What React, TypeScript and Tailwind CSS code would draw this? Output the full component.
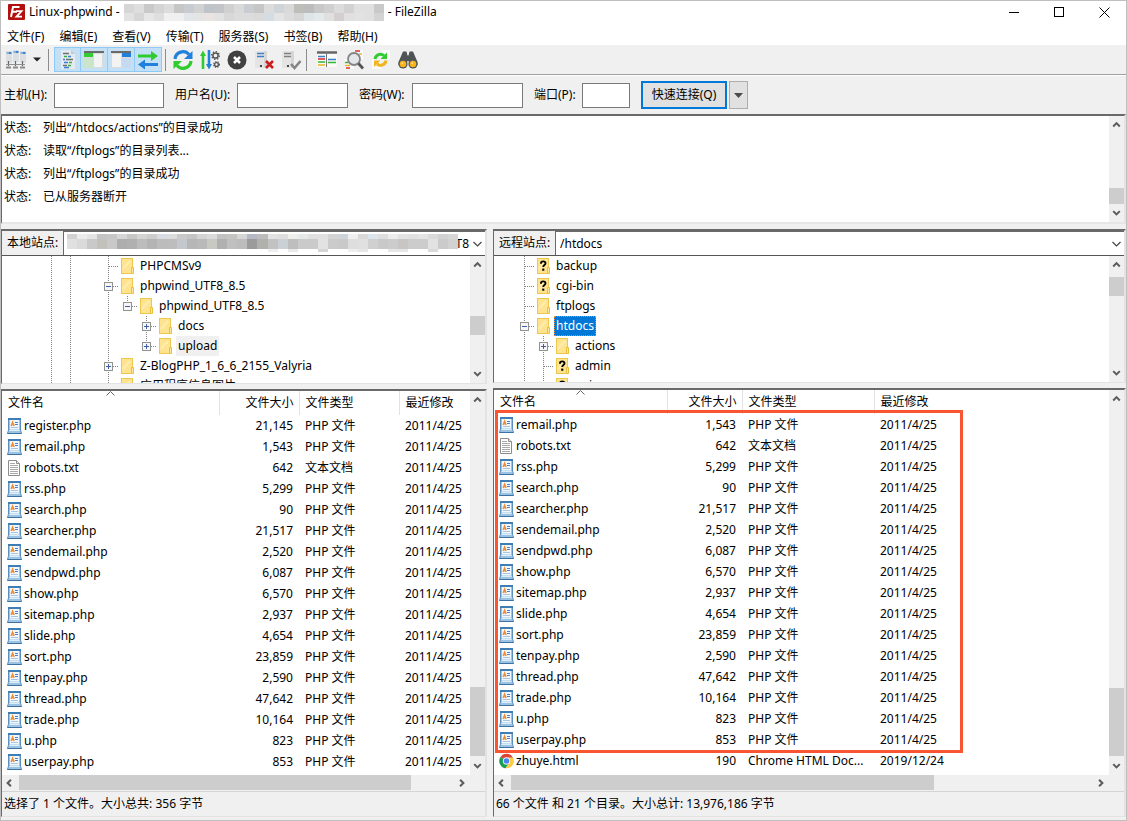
import React from "react";

type FileRow = { name: string; size: string; type: string; date: string };

const FONT = "font-['Noto_Sans','Noto_Sans_CJK_SC',sans-serif]";

const php = (name: string, size: string): FileRow => ({ name, size, type: "PHP 文件", date: "2011/4/25" });
const txt = (name: string, size: string): FileRow => ({ name, size, type: "文本文档", date: "2011/4/25" });

const sharedFiles: FileRow[] = [
  php("remail.php", "1,543"),
  txt("robots.txt", "642"),
  php("rss.php", "5,299"),
  php("search.php", "90"),
  php("searcher.php", "21,517"),
  php("sendemail.php", "2,520"),
  php("sendpwd.php", "6,087"),
  php("show.php", "6,570"),
  php("sitemap.php", "2,937"),
  php("slide.php", "4,654"),
  php("sort.php", "23,859"),
  php("tenpay.php", "2,590"),
  php("thread.php", "47,642"),
  php("trade.php", "10,164"),
  php("u.php", "823"),
  php("userpay.php", "853"),
];

const localFiles: FileRow[] = [php("register.php", "21,145"), ...sharedFiles];
const remoteFiles: FileRow[] = [
  ...sharedFiles,
  { name: "zhuye.html", size: "190", type: "Chrome HTML Doc...", date: "2019/12/24" },
];

/* ---------- small drawings ---------- */

function FileZillaLogo() {
  return (
    <svg width="17" height="16" viewBox="0 0 17 16" className="shrink-0">
      <rect width="17" height="16" rx="1" fill="#b40f0f" />
      <path d="M3 13 5 3h6.5M4 7.8h5" stroke="#fff" strokeWidth="2" fill="none" />
      <path d="M8 7.2h5.5L8.5 12.6h5.5" stroke="#fff" strokeWidth="1.8" fill="none" />
    </svg>
  );
}

function Mosaic({ rows, cell, heights }: { rows: string[][]; cell: number; heights: number[] }) {
  const width = Math.max(...rows.map((r) => r.length)) * cell;
  const height = heights.reduce((a, b) => a + b, 0);
  let y = 0;
  return (
    <svg width="100%" height={height} viewBox={`0 0 ${width} ${height}`} preserveAspectRatio="none" shapeRendering="crispEdges" className="block">
      {rows.map((row, r) => {
        const top = y;
        y += heights[r];
        return row.map((c, i) => <rect key={`${r}-${i}`} x={i * cell} y={top} width={cell} height={heights[r]} fill={c} />);
      })}
    </svg>
  );
}

const titleMosaic = [
  "#d6d6d6 #dedede #c9c9c9 #d4d4d4 #dcdcdc #c6c6c6 #c8cbd0 #d2d2d2 #bfc4c9 #c2c4c8 #d0d0d0 #dadada #c9cdd1 #c6c6c6 #dcdcdc #cfd4d8 #d9d9d9 #bdbdb9 #bcbcbc #c8c8c8 #cfcfcf #dcdcdc #d2d2d2 #e0e0e0 #e0e0e0 #c9c9c9".split(" "),
  "#e2e2e2 #d6d6d6 #e6e6e6 #dedede #f0f0f0 #f0f0f0 #e3e6e8 #e4e4e4 #e9e4e2 #e2e2e2 #d8d8d8 #dcdcdc #dcdcdc #dadada #d4dde3 #e4e4e4 #dcdcdc #d6d6d6 #dfe4e6 #e2eaec #e0e0e0 #d2cfce #e0e0e0 #e2e2e2 #e0e0e0 #d3d3d3".split(" "),
];

const pathMosaic = [
  "#d2d2d2 #ececec #e4e4e4 #c4c4c4 #c6c6c6 #d6d6d6 #c6c6c4 #d4d4d4 #cdcdcd #d6dce2 #dcdcdc #c9c9c9 #c4c4c4 #d4d4d4 #dadada #c2c2c2 #c4c4c2 #d6d6d6 #b5b9c6 #bcbcbc #e2e2e2 #dedede #efefec #e6e9ea #e0e0e0 #e0e0e0 #d4d4d4 #cfd4d8 #efefef #d9d9d9 #dce4ec #dedede #ececec #e2e2e2 #e0e0e0 #e4e4e4 #dadada #d2d2d2 #d6d6d6".split(" "),
  "#e0e0e0 #dadada #c9c9c9 #c2c1bb #c9c9c9 #adadad #b0b0b0 #bcbcbc #b4b4b4 #bcbcbc #bdbdbd #c4c8ce #b6b6b6 #b9b9b9 #c9c9c4 #b0b0b0 #c0c0c0 #bcbcbc #9b9b9b #b0b0ac #c2c2c2 #cad0d5 #bebebe #cacaca #cacaca #e2e2e2 #cbcbcb #c9c9c9 #dedede #e0e0e0 #d0d0d0 #c9c9c9 #cccccc #c9c5c3 #cccccc #cccccc #e2e2e2 #cbcbcb #d2d2d2".split(" "),
  "#fff #fff #fff #fff #fff #fff #fff #fff #fff #fff #fff #fff #fff #fff #fff #fff #fff #fff #fff #fff #eeeeee #fff #e9e9e9 #fff #fff #d4d4d4 #fff #fff #eeeeee #e6e6e6 #fff #fff #e6e6e6 #e6e6e6 #fff #fff #d9d9d9 #fff #fff".split(" "),
];

function FolderIcon({ unknown = false }: { unknown?: boolean }) {
  return (
    <svg width="13" height="16" viewBox="0 0 13 16" className="ml-[3px] mr-1 shrink-0">
      <rect x=".5" y=".5" width="11" height="15" fill="#ffe38f" stroke="#ecc84e" />
      <path d="M2 11 9 3" stroke="#ffedb0" strokeWidth="2" />
      <path d="M10.500 9.500h2v6h-2z" fill="#ffe9a0" stroke="#e8c040" />
      {unknown && (
        <>
          <path d="M4 5.800V5q0-1.600 2.200-1.600T8.500 5.200q0 1.200-1.400 2.100-.8.500-.8 1.800" fill="none" stroke="#000" strokeWidth="1.9" />
          <rect x="5.2" y="10.6" width="2.1" height="2.1" fill="#000" />
        </>
      )}
    </svg>
  );
}

type Guide = "none" | "line" | "tee" | "plus" | "minus" | "plusEnd" | "minusEnd";

function GuideCell({ kind }: { kind: Guide }) {
  const box = kind.startsWith("plus") || kind.startsWith("minus");
  const end = kind.endsWith("End");
  return (
    <svg width="19" height="20" viewBox="0 0 19 20" className="shrink-0" shapeRendering="crispEdges">
      {kind !== "none" && <path d={end ? "M9.5 0V10" : "M9.5 0V20"} stroke="#808080" strokeDasharray="1 1" />}
      {kind !== "none" && kind !== "line" && <path d="M10 10.5H20" stroke="#808080" strokeDasharray="1 1" />}
      {box && (
        <>
          <rect x="5.5" y="6.5" width="8" height="8" fill="#f6f6f6" stroke="#919191" />
          <path d={kind.startsWith("plus") ? "M7 10.5h5M9.5 8v5" : "M7 10.5h5"} stroke="#3f5fa8" />
        </>
      )}
    </svg>
  );
}

function PhpIcon() {
  return (
    <svg width="15" height="16" viewBox="0 0 15 16" className="shrink-0">
      <path d="M1.500.5h12v11.500l1 3.500H.5l1-3.500z" fill="#9cc3e2" stroke="#5b8fbd" />
      <path d="M1 0h13v2H1z" fill="#3f7db5" />
      <path d="M3 2h9v9.500H3z" fill="#f1f8fd" />
      <path d="M4 8 5.600 4 7.200 8M4.600 6.800h2" stroke="#f08c2e" strokeWidth="1.300" fill="none" />
      <path d="M8 4.500h3M8 6.500h3" stroke="#4a7fd8" />
      <path d="M4 9.500h7" stroke="#a9c4de" />
      <path d="M2.500 12.500h10" stroke="#dceefa" />
      <path d="M.5 15.500h14" stroke="#3a72a6" />
    </svg>
  );
}

function TxtIcon() {
  return (
    <svg width="15" height="16" viewBox="0 0 15 16" className="shrink-0">
      <path d="M1.500.5h8l3 3v12h-11z" fill="#fff" stroke="#8c8c8c" />
      <path d="M9.500.5v3h3" fill="#e6e6e6" stroke="#8c8c8c" />
      <path d="M3 3.500h5M3 5.500h8M3 7.500h8M3 9.500h8M3 11.500h8M3 13.500h8" stroke="#a8a8a8" />
    </svg>
  );
}

function ChromeIcon() {
  return (
    <svg width="15" height="16" viewBox="0 0 16 16" className="shrink-0">
      <path d="M8 8 1.500 3.800A7.700 7.700 0 0 1 15 4.600H8z" fill="#dc4437" />
      <path d="M8 8 1.500 3.800A7.700 7.700 0 0 0 7 15.700L11 10z" fill="#199d58" />
      <path d="M8 4.600h7a7.700 7.700 0 0 1-8 11.100L11 9.600z" fill="#ffcd41" />
      <circle cx="8" cy="8" r="3.900" fill="#f4f4f4" />
      <circle cx="8" cy="8" r="3" fill="#4a86f0" />
    </svg>
  );
}

function RowIcon({ name }: { name: string }) {
  if (name.endsWith(".txt")) return <TxtIcon />;
  if (name.endsWith(".html")) return <ChromeIcon />;
  return <PhpIcon />;
}

/* ---------- scroll bars ---------- */

const arrowPaths = {
  up: "M4.5 9.5 8 6l3.5 3.5",
  down: "M4.5 6 8 9.5 11.5 6",
  left: "M9.5 4.5 6 8l3.5 3.5",
  right: "M6.5 4.5 10 8l-3.5 3.5",
};

function Arrow({ dir }: { dir: keyof typeof arrowPaths }) {
  return (
    <svg width="15" height="16" viewBox="0 0 16 16" className="block shrink-0">
      <path d={arrowPaths[dir]} fill="none" stroke="#5c5c5c" strokeWidth="2.2" />
    </svg>
  );
}

function VScroll({ before, thumb, after }: { before: number; thumb: number; after: number }) {
  return (
    <div aria-hidden="true" className="flex w-[15px] shrink-0 flex-col bg-[#f0f0f0] py-px">
      <Arrow dir="up" />
      <div style={{ flexGrow: before }} className="basis-0" />
      <div style={{ flexGrow: thumb }} className="basis-0 bg-[#cdcdcd]" />
      <div style={{ flexGrow: after }} className="basis-0" />
      <Arrow dir="down" />
    </div>
  );
}

function HScroll({ thumb, after }: { thumb: number; after: number }) {
  return (
    <div aria-hidden="true" className="flex h-[15px] shrink-0 items-center bg-[#f0f0f0] pr-4">
      <Arrow dir="left" />
      <div style={{ flexGrow: thumb }} className="ml-0.5 h-full basis-0 bg-[#cdcdcd]" />
      <div style={{ flexGrow: after }} className="basis-0" />
      <Arrow dir="right" />
    </div>
  );
}

/* ---------- tool bar ---------- */

function ToolButton({ label, active = false, children }: { label: string; active?: boolean; children: React.ReactNode }) {
  return (
    <button
      type="button"
      aria-label={label}
      className={`flex h-[25px] w-[27px] shrink-0 items-center justify-center ${active ? "border border-l-0 border-[#90c8f6] bg-[#c4e0f5] first:border-l" : ""}`}
    >
      <svg width="22" height="22" viewBox="0 0 22 22" className="shrink-0">{children}</svg>
    </button>
  );
}

function Toolbar() {
  return (
    <div className="flex h-[29px] items-center bg-[#f0f0f0] pl-px">
      <ToolButton label="站点管理器">
        {[1, 8, 15].map((x) => (
          <g key={x}>
            <rect x={x} y={x === 8 ? 1 : 2} width="6" height="12" fill="#dcdfe2" />
            <path d={`M${x + 0.5} ${x === 8 ? 3 : 4}h2.500`} stroke="#6fa5da" strokeWidth="1.600" />
            <path d={`M${x + 3} ${x === 8 ? 2 : 3}h2.500v2h-2.500z`} fill="#3d84cc" />
            <path d={`M${x + 2.5} 12v5`} stroke="#666" strokeWidth="1.200" />
            <path d={`M${x} 18.500h5`} stroke="#8a8a8a" strokeWidth="2" />
          </g>
        ))}
        <path d="M1 15.500h19" stroke="#8f8f8f" />
      </ToolButton>
      <button type="button" aria-label="打开站点列表" className="flex h-[25px] w-4 items-center justify-center">
        <svg width="8" height="5" viewBox="0 0 8 5"><path d="M0 .5h8L4 4.500z" fill="#222" /></svg>
      </button>
      <div className="ml-[3px] mr-[5px] h-[22px] w-px shrink-0 bg-[#8c8c8c]" />
      <div className="flex">
        <ToolButton label="消息日志" active>
          <path d="M4 1h10l4 4v15H4z" fill="#e4eaef" />
          <path d="M14 1v4h4z" fill="#c2c9cf" />
          <path d="M6 4.500h6M9 10.500h7M6 16.500h4" stroke="#6b7176" strokeWidth="1.400" />
          <path d="M7 7.500h3M12 13.500h3M11 16.500h3" stroke="#3ab03a" strokeWidth="1.400" />
          <path d="M11 7.500h3M7 13.500h4M6 10.500h2M7 18.500h5" stroke="#3b7fd0" strokeWidth="1.400" />
        </ToolButton>
        <ToolButton label="本地目录树" active>
          <path d="M1 2h20v17H1z" fill="#dadada" />
          <path d="M1 2h20v2H1z" fill="#6a6a6a" />
          <path d="M1 4h9v4H1z" fill="#33cc33" />
          <path d="M1 9h9v10H1z" fill="#c9e6cb" />
          <path d="M11 5h8v13h-8z" fill="#f3f3f3" />
        </ToolButton>
        <ToolButton label="远程目录树" active>
          <path d="M1 2h20v17H1z" fill="#dadada" />
          <path d="M1 2h20v2H1z" fill="#6a6a6a" />
          <path d="M12 4h9v4h-9z" fill="#2080dc" />
          <path d="M12 9h9v10h-9z" fill="#c3daf0" />
          <path d="M2 5h9v13H2z" fill="#f3f3f3" />
        </ToolButton>
        <ToolButton label="传输队列" active>
          <path d="M1 5.500h13V2l7 5-7 5V8.500H1z" fill="#2fcb2f" />
          <path d="M21 14H8v-3.500l-7 5 7 5V17h13z" fill="#2080dc" />
        </ToolButton>
      </div>
      <div className="mx-[3px] h-[22px] w-px shrink-0 bg-[#8c8c8c]" />
      <div className="flex">
        <ToolButton label="刷新">
          <path d="M3 10A8 8 0 0 1 17 5.500" fill="none" stroke="#2080dc" strokeWidth="3.200" />
          <path d="M20.500 2v8H12z" fill="#2080dc" />
          <path d="M19 12A8 8 0 0 1 5 16.500" fill="none" stroke="#2fcb2f" strokeWidth="3.200" />
          <path d="M1.500 20v-8H10z" fill="#2fcb2f" />
        </ToolButton>
        <ToolButton label="处理队列">
          <path d="M4 20V5" stroke="#2fcb2f" strokeWidth="2.600" />
          <path d="M1 7 4 1.500 7 7z" fill="#2fcb2f" />
          <path d="M10 1v15" stroke="#2080dc" strokeWidth="2.600" />
          <path d="M7 15l3 5.500 3-5.500z" fill="#2080dc" />
          <circle cx="16.500" cy="6.500" r="2.600" fill="none" stroke="#555" strokeWidth="1.500" />
          <circle cx="16.500" cy="6.500" r="3.900" fill="none" stroke="#555" strokeWidth="1.200" strokeDasharray="1.500 1.500" />
          <circle cx="17.500" cy="15.500" r="1.900" fill="none" stroke="#555" strokeWidth="1.400" />
          <circle cx="17.500" cy="15.500" r="2.900" fill="none" stroke="#555" strokeWidth="1.100" strokeDasharray="1.200 1.200" />
        </ToolButton>
        <ToolButton label="取消当前操作">
          <circle cx="11" cy="11" r="9.500" fill="#414141" />
          <path d="m8 8 6 6M14 8l-6 6" stroke="#fff" strokeWidth="2.500" />
        </ToolButton>
        <ToolButton label="断开连接">
          <path d="M2 2h12v17H2z" fill="#e4e4e4" />
          <path d="M11 2h3v17h-3z" fill="#d6d6d6" />
          <path d="M4 4.500h7M4 7.500h7" stroke="#3b80c8" strokeWidth="1.500" />
          <path d="M7 16h2v2H7z" fill="#444" />
          <path d="m13 12 7 7M20 12l-7 7" stroke="#c81e1e" strokeWidth="2.600" />
        </ToolButton>
        <ToolButton label="重新连接">
          <path d="M2 2h12v17H2z" fill="#e4e4e4" />
          <path d="M11 2h3v17h-3z" fill="#d6d6d6" />
          <path d="M4 4.500h7M4 7.500h7" stroke="#808080" strokeWidth="1.500" />
          <path d="M7 16h2v2H7z" fill="#444" />
          <path d="m11 15 3.500 4L20.500 12" fill="none" stroke="#858585" strokeWidth="2.600" />
        </ToolButton>
      </div>
      <div className="ml-0.5 mr-1.5 h-[22px] w-px shrink-0 bg-[#8c8c8c]" />
      <ToolButton label="目录过滤">
        <path d="M1 3h20v15H1z" fill="#fafafa" />
        <path d="M1 3.500h20" stroke="#666" strokeWidth="2.500" />
        <path d="M2 7.500h7M12 10.500h8" stroke="#3b80c8" strokeWidth="1.600" />
        <path d="M2 10h7" stroke="#d83232" strokeWidth="1.600" />
        <path d="M2 13h7M12 13.500h8" stroke="#2fb82f" strokeWidth="1.600" />
        <path d="M2 16h7" stroke="#edb52a" strokeWidth="1.600" />
        <path d="M10.500 3v15" stroke="#777" />
      </ToolButton>
      <ToolButton label="目录比较">
        <path d="M11 1h9v9h-9zM2 10h9v10H2z" fill="#fbfbfb" />
        <path d="M12 2h5" stroke="#d83232" strokeWidth="1.500" />
        <path d="M16 5h3M2 16.500h5" stroke="#edb52a" strokeWidth="1.500" />
        <path d="M2 13.500h3" stroke="#2fb82f" strokeWidth="1.500" />
        <path d="M3 19h4" stroke="#d83232" strokeWidth="1.500" />
        <circle cx="11" cy="10" r="6" fill="#e4e7ea" stroke="#858585" strokeWidth="1.800" />
        <path d="m15.500 14.500 4.500 5" stroke="#555" strokeWidth="2.800" />
      </ToolButton>
      <ToolButton label="同步浏览">
        <path d="M12 1h8v9h-8zM2 11h9v9H2z" fill="#fbfbfb" />
        <path d="M5 10a5.500 5.500 0 0 1 9-3.500" fill="none" stroke="#2fcb2f" strokeWidth="3" />
        <path d="M17 3.500V10h-6.500z" fill="#2fcb2f" />
        <path d="M16 11.500a5.500 5.500 0 0 1-9 3.500" fill="none" stroke="#f0b51e" strokeWidth="3" />
        <path d="M4 18v-6.500h6.500z" fill="#f0b51e" />
      </ToolButton>
      <ToolButton label="查找文件">
        <path d="M6 2.500h3.500l1 4h1l1-4H16L20.500 13v3H13l-1.500-4h-1L9 16H1.500v-3z" fill="#505356" />
        <circle cx="6" cy="15" r="4.600" fill="#505356" />
        <circle cx="16" cy="15" r="4.600" fill="#505356" />
        <circle cx="6" cy="15" r="3.300" fill="#f7b31c" />
        <circle cx="16" cy="15" r="3.300" fill="#f7b31c" />
        <path d="M4.500 13.500H6V15H4.500zM14.500 13.500H16V15h-1.500z" fill="#ffe08a" />
      </ToolButton>
    </div>
  );
}

/* ---------- quick connect ---------- */

function Field({ id, label, labelClass, inputClass, type = "text" }: { id: string; label: string; labelClass: string; inputClass: string; type?: string }) {
  return (
    <div className="flex items-center">
      <label htmlFor={id} className={`shrink-0 whitespace-nowrap ${labelClass}`}>{label}</label>
      <input id={id} type={type} className={`h-[25px] border border-[#7a7a7a] bg-white px-1 outline-none ${inputClass}`} />
    </div>
  );
}

function QuickConnect() {
  return (
    <form className="flex h-[38px] items-center gap-[11px] bg-[#f0f0f0] pl-[3px]" onSubmit={(e) => e.preventDefault()}>
      <Field id="host" label="主机(H):" labelClass="w-[50px]" inputClass="w-[110px]" />
      <Field id="user" label="用户名(U):" labelClass="w-[62px]" inputClass="w-[111px]" />
      <Field id="pass" label="密码(W):" labelClass="w-[53px]" inputClass="w-[111px]" type="password" />
      <Field id="port" label="端口(P):" labelClass="w-[48px]" inputClass="w-[48px]" />
      <div className="flex gap-0.5">
        <button type="submit" className="h-[28px] w-[86px] whitespace-nowrap border-2 border-[#0078d7] bg-[#e1e1e1]">快速连接(Q)</button>
        <button type="button" aria-label="历史连接" className="flex h-[28px] w-[19px] items-center justify-center border border-[#adadad] bg-[#e1e1e1]">
          <svg width="9" height="5" viewBox="0 0 9 5"><path d="M0 0h9L4.500 5z" fill="#4a4a4a" /></svg>
        </button>
      </div>
    </form>
  );
}

/* ---------- message log ---------- */

const logLines = ["列出“/htdocs/actions”的目录成功", "读取“/ftplogs”的目录列表...", "列出“/ftplogs”的目录成功", "已从服务器断开"];

function MessageLog() {
  return (
    <div className="flex h-[110px] border-2 border-l border-b-[#e6e6e6] border-l-[#696969] border-r-[#e3e3e3] border-t-[#696969] bg-white">
      <dl className="min-w-0 flex-1 pl-0.5">
        {logLines.map((line) => (
          <div key={line} className="flex h-[23px] items-center">
            <dt className="w-[39px] shrink-0">状态:</dt>
            <dd className="truncate">{line}</dd>
          </div>
        ))}
      </dl>
      <VScroll before={57} thumb={17} after={1} />
    </div>
  );
}

/* ---------- site panes ---------- */

type TreeNode = { guides: Guide[]; label: string; unknown?: boolean; state?: "selected" | "inactive" };

const localTree: TreeNode[] = [
  { guides: ["line", "line", "none", "tee"], label: "PHPCMSv9" },
  { guides: ["line", "line", "none", "minus"], label: "phpwind_UTF8_8.5" },
  { guides: ["line", "line", "none", "line", "minusEnd"], label: "phpwind_UTF8_8.5" },
  { guides: ["line", "line", "none", "line", "none", "plus"], label: "docs" },
  { guides: ["line", "line", "none", "line", "none", "plusEnd"], label: "upload", state: "inactive" },
  { guides: ["line", "line", "none", "plus"], label: "Z-BlogPHP_1_6_6_2155_Valyria" },
  { guides: ["line", "line", "none", "tee"], label: "应用程序信息图片" },
];

const remoteTree: TreeNode[] = [
  { guides: ["tee"], label: "backup", unknown: true },
  { guides: ["tee"], label: "cgi-bin", unknown: true },
  { guides: ["tee"], label: "ftplogs" },
  { guides: ["minus"], label: "htdocs", state: "selected" },
  { guides: ["line", "plus"], label: "actions" },
  { guides: ["line", "tee"], label: "admin", unknown: true },
  { guides: ["line", "tee"], label: "api", unknown: true },
];

function Tree({ nodes, indent }: { nodes: TreeNode[]; indent: string }) {
  return (
    <ul className={`min-w-0 flex-1 overflow-hidden bg-white ${indent}`}>
      {nodes.map((n, i) => (
        <li key={i} className="flex h-5 items-center">
          {n.guides.map((g, j) => <GuideCell key={j} kind={g} />)}
          <FolderIcon unknown={n.unknown} />
          <span
            className={`flex h-5 items-center whitespace-nowrap px-0.5 ${
              n.state === "selected" ? "bg-[#0078d7] text-white outline-1 -outline-offset-1 outline-dotted outline-[#e08a3c]" : n.state === "inactive" ? "bg-[#f0f0f0]" : ""
            }`}
          >
            {n.label}
          </span>
        </li>
      ))}
    </ul>
  );
}

function FileTable({ files, widths }: { files: FileRow[]; widths: [string, string, string] }) {
  const cell = "overflow-hidden whitespace-nowrap p-0";
  return (
    <table className="w-full table-fixed border-collapse">
      <thead>
        <tr className="h-6">
          <th className={`relative border-r border-[#e2e2e2] pl-1.5 text-left font-normal ${widths[0]}`}>
            文件名
            <svg width="9" height="5" viewBox="0 0 9 5" className="absolute inset-x-0 top-0 mx-auto">
              <path d="M.5 4.500 4.500.5l4 4" fill="none" stroke="#666" />
            </svg>
          </th>
          <th className={`border-r border-[#e2e2e2] p-0 pr-[5px] text-right font-normal ${widths[1]}`}>文件大小</th>
          <th className={`border-r border-[#e2e2e2] p-0 pl-1.5 text-left font-normal ${widths[2]}`}>文件类型</th>
          <th className="p-0 pl-1.5 text-left font-normal">最近修改</th>
        </tr>
      </thead>
      <tbody>
        {files.map((f) => (
          <tr key={f.name} className="h-[21px]">
            <td className={cell}>
              <div className="flex items-center gap-0.5 pl-[5px]">
                <RowIcon name={f.name} />
                {f.name}
              </div>
            </td>
            <td className={`${cell} pr-1.5 text-right`}>{f.size}</td>
            <td className={`${cell} pl-1.5`}>{f.type}</td>
            <td className={`${cell} pl-1.5`}>{f.date}</td>
          </tr>
        ))}
      </tbody>
    </table>
  );
}

const frame = "border-l border-t-2 border-r-2 border-b border-l-[#696969] border-t-[#696969] border-r-[#e3e3e3] border-b-[#e3e3e3]";

function SitePane(props: {
  id: string;
  label: string;
  path: string;
  selectClass: string;
  overlay?: React.ReactNode;
  tree: TreeNode[];
  indent: string;
  treeHeight: string;
  treeScroll: [number, number, number];
  files: FileRow[];
  widths: [string, string, string];
  listScroll: [number, number, number];
  hScroll: [number, number];
  highlight?: React.ReactNode;
  status: string;
}) {
  return (
    <section className="flex min-w-0 flex-col">
      <div className={`flex flex-col ${frame} ${props.treeHeight}`}>
        <div className="flex h-[25px] shrink-0 border-b border-[#555] bg-white">
          <label htmlFor={props.id} className="flex w-[62px] shrink-0 items-center whitespace-nowrap border-r border-[#696969] bg-[#f0f0f0] pl-[5px]">{props.label}</label>
          <div className="relative min-w-0 flex-1 border-t border-[#696969]">
            <select id={props.id} defaultValue={props.path} className={`h-full w-full appearance-none bg-white pl-1 outline-none ${props.selectClass}`}>
              <option>{props.path}</option>
            </select>
            {props.overlay}
            <svg width="9" height="6" viewBox="0 0 9 6" className="pointer-events-none absolute right-[3px] top-[9px]">
              <path d="M.5 1 4.500 5l4-4" fill="none" stroke="#444" strokeWidth="1.200" />
            </svg>
          </div>
        </div>
        <div className="flex min-h-0 flex-1">
          <Tree nodes={props.tree} indent={props.indent} />
          <VScroll before={props.treeScroll[0]} thumb={props.treeScroll[1]} after={props.treeScroll[2]} />
        </div>
      </div>
      <div className={`mt-[5px] flex flex-1 flex-col ${frame}`}>
        <div className="flex flex-1">
          <div className="relative min-w-0 flex-1 bg-white">
            <FileTable files={props.files} widths={props.widths} />
            {props.highlight}
          </div>
          <VScroll before={props.listScroll[0]} thumb={props.listScroll[1]} after={props.listScroll[2]} />
        </div>
        <HScroll thumb={props.hScroll[0]} after={props.hScroll[1]} />
        <footer className="mt-px flex h-[25px] shrink-0 items-center border-t border-[#d4d4d4] pl-0.5">{props.status}</footer>
      </div>
    </section>
  );
}

/* ---------- window ---------- */

const menus = ["文件(F)", "编辑(E)", "查看(V)", "传输(T)", "服务器(S)", "书签(B)", "帮助(H)"];

export default function App() {
  return (
    <div className={`flex min-h-screen flex-col border border-[#bfbfbf] bg-[#f0f0f0] text-[12px] leading-4 text-black ${FONT}`}>
      <header className="flex h-[22px] items-center bg-white pl-[7px]">
        <FileZillaLogo />
        <h1 className="flex items-center gap-1 whitespace-nowrap pl-1">
          Linux-phpwind -
          <span className="block w-[260px]">
            <Mosaic rows={titleMosaic} cell={10} heights={[9, 8]} />
          </span>
          <span>- FileZilla</span>
        </h1>
        <div className="ml-auto flex items-center gap-[35px] pr-4">
          <button type="button" aria-label="最小化">
            <svg width="10" height="11" viewBox="0 0 10 11" className="block"><path d="M0 5.500h10" stroke="#000" /></svg>
          </button>
          <button type="button" aria-label="最大化">
            <svg width="10" height="10" viewBox="0 0 10 10" className="block"><rect x=".5" y=".5" width="9" height="9" fill="none" stroke="#000" /></svg>
          </button>
          <button type="button" aria-label="关闭">
            <svg width="11" height="11" viewBox="0 0 11 11" className="block"><path d="m.5.5 10 10M10.500.5l-10 10" stroke="#000" /></svg>
          </button>
        </div>
      </header>
      <nav className="flex h-[22px] items-center gap-[15px] bg-white pl-1.5 pt-1.5">
        {menus.map((m) => <button key={m} type="button" className="whitespace-nowrap">{m}</button>)}
      </nav>
      <Toolbar />
      <div className="h-0.5 border-t border-[#a0a0a0] bg-white" />
      <QuickConnect />
      <MessageLog />
      <main className="mt-[5px] grid flex-1 grid-cols-[minmax(0,486fr)_minmax(0,633fr)] gap-1.5 pb-[3px]">
        <SitePane
          id="local-site"
          label="本地站点:"
          path="T8"
          selectClass="pr-4 [text-align-last:right]"
          overlay={
            <div className="pointer-events-none absolute left-[3px] right-[27px] top-0.5">
              <Mosaic rows={pathMosaic} cell={10} heights={[5, 10, 3]} />
            </div>
          }
          tree={localTree}
          indent="pl-[40px]"
          treeHeight="h-[155px]"
          treeScroll={[44, 20, 32]}
          files={localFiles}
          widths={["w-[217px]", "w-[80px]", "w-[100px]"]}
          listScroll={[281, 69, 2]}
          hScroll={[391, 43]}
          status="选择了 1 个文件。大小总共: 356 字节"
        />
        <SitePane
          id="remote-site"
          label="远程站点:"
          path="/htdocs"
          selectClass="pr-4"
          tree={remoteTree}
          indent="pl-[21px]"
          treeHeight="h-[154px]"
          treeScroll={[4, 20, 71]}
          files={remoteFiles}
          widths={["w-[173px]", "w-[75px]", "w-[132px]"]}
          listScroll={[282, 68, 2]}
          hScroll={[424, 159]}
          highlight={<div className="pointer-events-none absolute left-px top-5 h-[343px] w-[468px] border-[3px] border-[#fa5532]" />}
          status="66 个文件 和 21 个目录。大小总计: 13,976,186 字节"
        />
      </main>
    </div>
  );
}
